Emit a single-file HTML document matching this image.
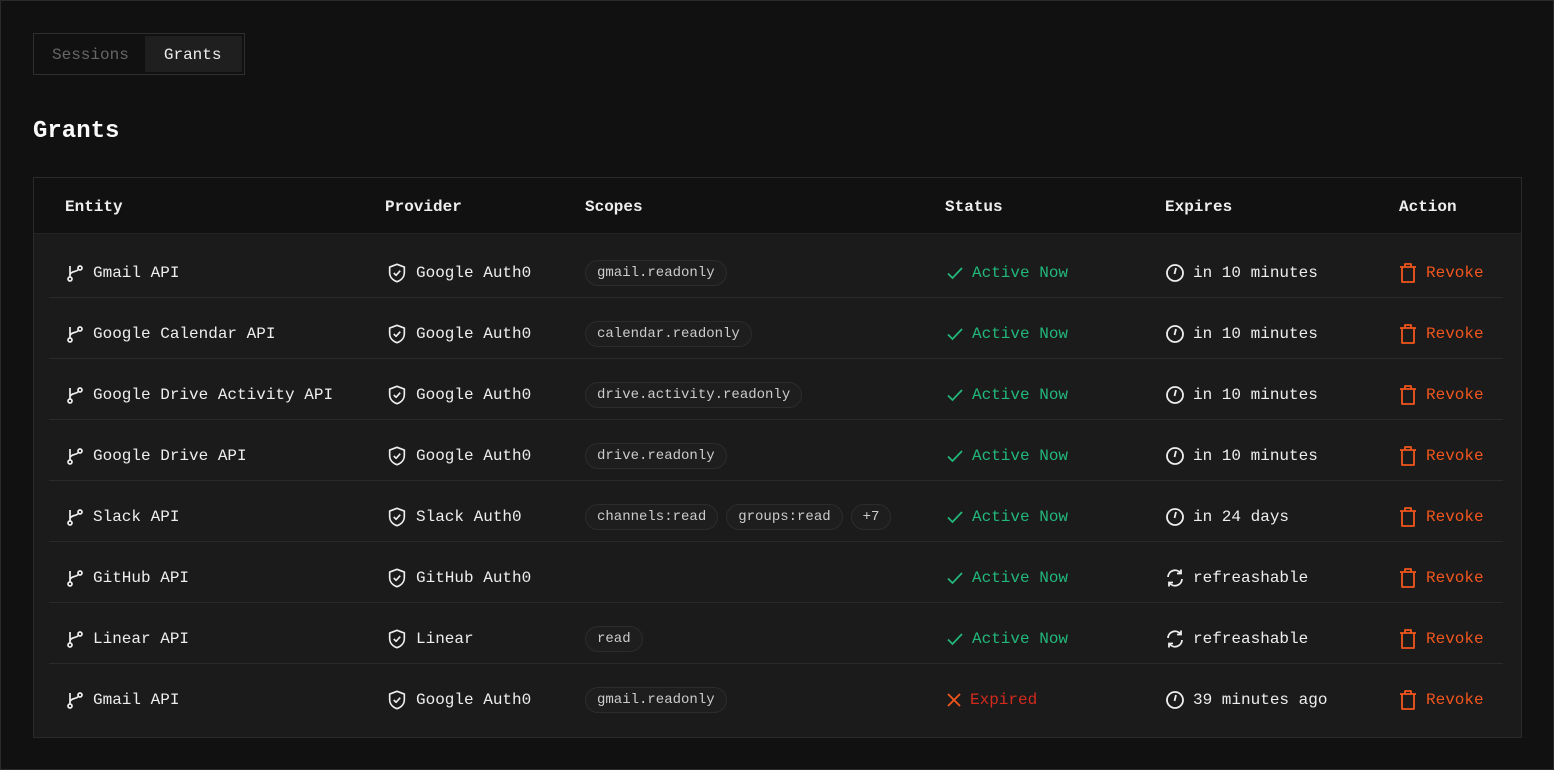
<!DOCTYPE html>
<html><head><style>
*{box-sizing:border-box;margin:0;padding:0}
body{width:1554px;height:770px;background:#111;font-family:"Liberation Mono",monospace;color:#eee;border:1px solid #2b2b2b;position:relative;overflow:hidden}
.tabs{position:absolute;left:32px;top:32px;width:212px;height:42px;border:1px solid #2e2e2e;display:flex;padding:2px}
.tabs div{height:36px;line-height:38px;font-size:16px;padding:0 16px}
.tabs .s{color:#666;width:110px}
.tabs .g{background:#1f1f1f;color:#eee;width:98px;padding:0 19px}
h1{position:absolute;left:32px;top:117px;font-size:24px;font-weight:bold;color:#fafafa}
.tbl{position:absolute;left:32px;top:176px;width:1489px;height:561px;border:1px solid #2a2a2a;background:#1b1b1b}
.hd{height:56px;background:#111;position:relative;font-size:16px;font-weight:bold;border-bottom:1px solid #242424}
.hd span,.row>div{position:absolute}
.hd span{top:20px}
.body{padding-top:3px}
.row{position:relative;height:61px;margin:0 18px 0 15px;border-bottom:1px solid #2a2a2a;font-size:16px}
.row:last-child{border-bottom:none}
.row>div{top:0;height:61px;display:flex;align-items:center;padding-top:11px;gap:8px}
.c1{left:16px}.c2{left:337px}.c3{left:536px}.c4{left:897px}.c5{left:1116px}.c6{left:1349px}
.chip{font-size:14px;color:#ccc;border:1px solid #2c2c2c;background:#1e1e1e;border-radius:14px;padding:0 11px;height:26px;line-height:24px}
.ok{color:#22b77b}.bad{color:#d42a1e}.rv{color:#f2561d}
svg{flex:none}
</style></head><body>
<div class="tabs"><div class="s">Sessions</div><div class="g">Grants</div></div>
<h1>Grants</h1>
<div class="tbl">
<div class="hd"><span style="left:31px">Entity</span><span style="left:351px">Provider</span><span style="left:551px">Scopes</span><span style="left:911px">Status</span><span style="left:1131px">Expires</span><span style="left:1365px">Action</span></div>
<div class="body" id="b"></div>
</div>
<script>
const br='<svg width="20" height="20" viewBox="0 0 20 20" fill="none" stroke="#eee" stroke-width="1.7"><circle cx="5" cy="16" r="2"/><circle cx="15" cy="5" r="2"/><path d="M5 14V3M5 12c0-4 8-3 8.5-6"/></svg>';
const sh='<svg width="22" height="22" viewBox="0 0 24 24" fill="none" stroke="#eee" stroke-width="1.8" stroke-linejoin="round"><path d="M12 2.5l8 3v6c0 5-3.5 8.5-8 10-4.5-1.5-8-5-8-10v-6z"/><path d="M8.5 12l2.5 2.5 4.5-5"/></svg>';
const ck='<svg width="18" height="18" viewBox="0 0 18 18" fill="none" stroke="#22b77b" stroke-width="1.8"><path d="M2 9.5l4.5 4.5L16 4"/></svg>';
const xx='<svg width="16" height="16" viewBox="0 0 16 16" fill="none" stroke="#f2561d" stroke-width="1.8"><path d="M2 2l12 12M14 2L2 14"/></svg>';
const cl='<svg width="20" height="20" viewBox="0 0 20 20" fill="none" stroke="#eee" stroke-width="1.8"><circle cx="10" cy="10" r="8"/><path d="M11 5l-1.5 6"/></svg>';
const rf='<svg width="20" height="20" viewBox="0 0 20 20" fill="none" stroke="#eee" stroke-width="1.8"><path d="M3 9a7 7 0 0 1 12.5-4M17 11a7 7 0 0 1-12.5 4"/><path d="M16 1.5v4h-4M4 18.5v-4h4"/></svg>';
const tr='<svg width="20" height="22" viewBox="0 0 20 22" fill="none" stroke="#f2561d" stroke-width="1.8" stroke-linejoin="round"><path d="M2 5h16M7 5V2h6v3M4 5v15h12V5"/></svg>';
const rows=[["Gmail API","Google Auth0",["gmail.readonly"],1,cl,"in 10 minutes"],
["Google Calendar API","Google Auth0",["calendar.readonly"],1,cl,"in 10 minutes"],
["Google Drive Activity API","Google Auth0",["drive.activity.readonly"],1,cl,"in 10 minutes"],
["Google Drive API","Google Auth0",["drive.readonly"],1,cl,"in 10 minutes"],
["Slack API","Slack Auth0",["channels:read","groups:read","+7"],1,cl,"in 24 days"],
["GitHub API","GitHub Auth0",[],1,rf,"refreashable"],
["Linear API","Linear",["read"],1,rf,"refreashable"],
["Gmail API","Google Auth0",["gmail.readonly"],0,cl,"39 minutes ago"]];
let h='';
for(const r of rows){h+=`<div class="row"><div class="c1">${br}<span>${r[0]}</span></div><div class="c2">${sh}<span>${r[1]}</span></div><div class="c3">${r[2].map(c=>`<span class="chip">${c}</span>`).join('')}</div><div class="c4">${r[3]?ck+'<span class="ok">Active Now</span>':xx+'<span class="bad">Expired</span>'}</div><div class="c5">${r[4]}<span>${r[5]}</span></div><div class="c6">${tr}<span class="rv">Revoke</span></div></div>`}
document.getElementById('b').innerHTML=h;
</script>
</body></html>
